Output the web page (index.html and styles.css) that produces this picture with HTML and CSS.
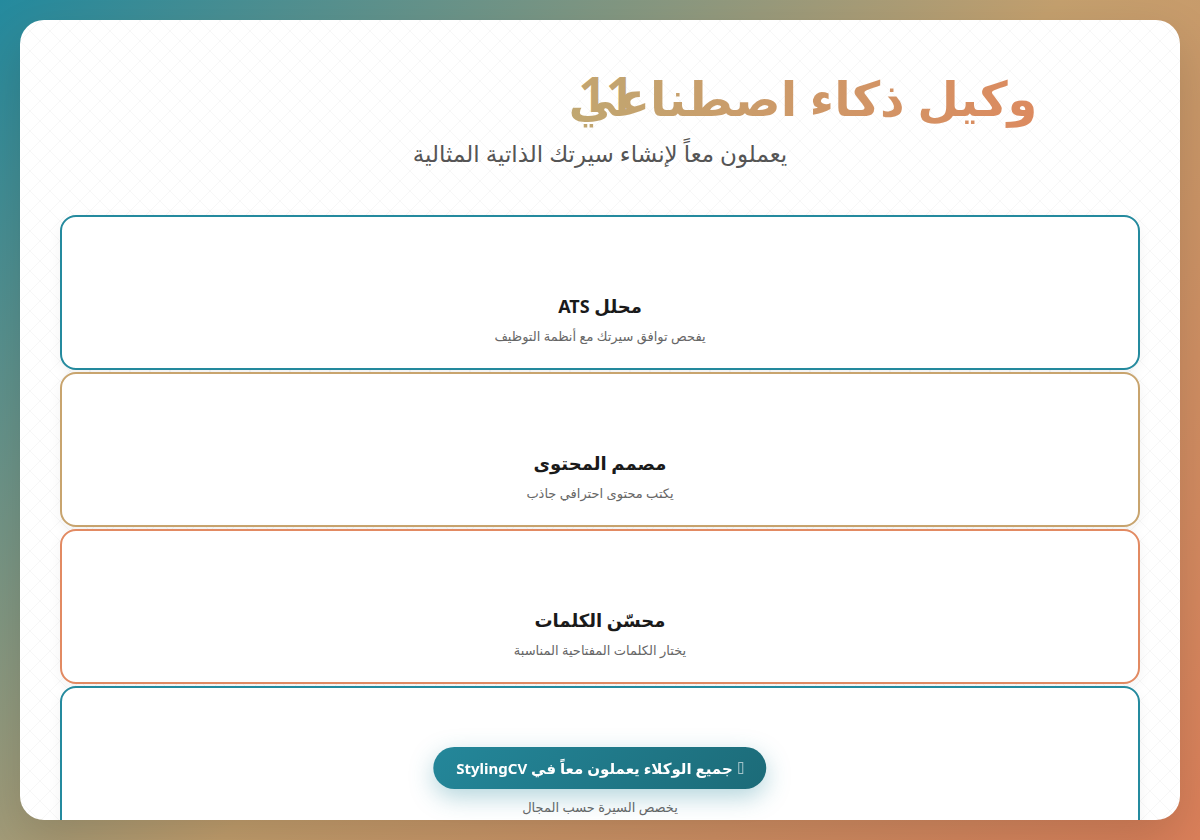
FILE: index.html
```html
<!DOCTYPE html>
<html lang="ar" dir="rtl">
<head>
    <meta charset="utf-8">
    <title>StylingCV - وكلاء الذكاء الاصطناعي</title>
    <link rel="stylesheet" href="styles.css">
</head>
<body>
<div class="container">
    <header class="hero">
        <h1><span class="title-text">وكيل ذكاء اصطناعي<span class="count">11</span></span></h1>
        <p class="subtitle">يعملون معاً لإنشاء سيرتك الذاتية المثالية</p>
    </header>

    <div class="agents">
        <div class="agent teal">
            <h3>محلل ATS</h3>
            <p>يفحص توافق سيرتك مع أنظمة التوظيف</p>
        </div>
        <div class="agent sand">
            <h3>مصمم المحتوى</h3>
            <p>يكتب محتوى احترافي جاذب</p>
        </div>
        <div class="agent coral">
            <h3>محسّن الكلمات</h3>
            <p>يختار الكلمات المفتاحية المناسبة</p>
        </div>
        <div class="agent teal">
            <h3>مخصص المجال</h3>
            <p>يخصص السيرة حسب المجال</p>
        </div>
    </div>
</div>

<button class="all-agents"><span class="icon"></span>جميع الوكلاء يعملون معاً في StylingCV</button>
</body>
</html>
```

FILE: styles.css
```css
* {
    box-sizing: border-box;
}

body {
    margin: 0;
    height: 840px;
    padding: 20px;
    overflow: hidden;
    font-family: 'Noto Sans', 'DejaVu Sans', sans-serif;
    background: linear-gradient(135deg, #248a9e 0%, #c4a06e 52%, #dc805a 100%);
}

.container {
    height: 800px;
    padding: 40px;
    overflow: hidden;
    border-radius: 24px;
    background-color: #fff;
    background-image:
        repeating-linear-gradient(45deg, transparent 0 13.1px, rgba(0, 0, 0, 0.03) 13.1px 14.14px),
        repeating-linear-gradient(-45deg, transparent 0 13.1px, rgba(0, 0, 0, 0.03) 13.1px 14.14px);
    box-shadow: 0 20px 50px rgba(0, 0, 0, 0.15);
}

/* header */
.hero {
    text-align: center;
    margin-bottom: 46px;
}

.hero h1 {
    margin: 0;
    padding-left: 406px;
    font-size: 48px;
    font-weight: 700;
    line-height: 1.6;
}

.title-text {
    position: relative;
    background: linear-gradient(90deg, #c0a771, #dc8a5f);
    -webkit-background-clip: text;
    background-clip: text;
    color: transparent;
}

.count {
    position: absolute;
    left: 10px;
    top: -9px;
    color: #c3a46f;
    -webkit-text-fill-color: #c3a46f;
}

.subtitle {
    margin: 0;
    font-size: 23px;
    line-height: 1.4;
    color: #555;
}

/* agent cards */
.agents {
    display: flex;
    flex-direction: column;
    gap: 2px;
}

.agent {
    height: 155px;
    padding: 77px 24px 0;
    text-align: center;
    border: 2px solid #248a9e;
    border-radius: 16px;
    background: #fff;
    box-shadow: 0 4px 14px rgba(0, 0, 0, 0.05);
}

.agent.sand {
    border-color: #c8a46e;
}

.agent.coral {
    border-color: #e28a62;
}

.agent h3 {
    margin: 0 0 8px;
    font-size: 18px;
    line-height: 1.4;
    color: #1a1a1a;
}

.agent p {
    margin: 0;
    font-size: 13px;
    line-height: 1.5;
    color: #666;
}

/* floating button */
.all-agents {
    position: fixed;
    bottom: 51px;
    left: 50%;
    transform: translateX(-50%);
    display: flex;
    align-items: center;
    gap: 6px;
    height: 42px;
    padding: 0 23px;
    border: none;
    border-radius: 21px;
    font-family: 'Noto Sans', 'DejaVu Sans', sans-serif;
    font-size: 15px;
    font-weight: 700;
    color: #fff;
    white-space: nowrap;
    background: linear-gradient(135deg, #24879a, #1c6b78);
    box-shadow: 0 8px 24px rgba(36, 135, 154, 0.35);
    cursor: pointer;
}

.icon {
    display: inline-block;
    width: 5px;
    height: 12px;
    border: 1px solid rgba(255, 255, 255, 0.6);
}
```
